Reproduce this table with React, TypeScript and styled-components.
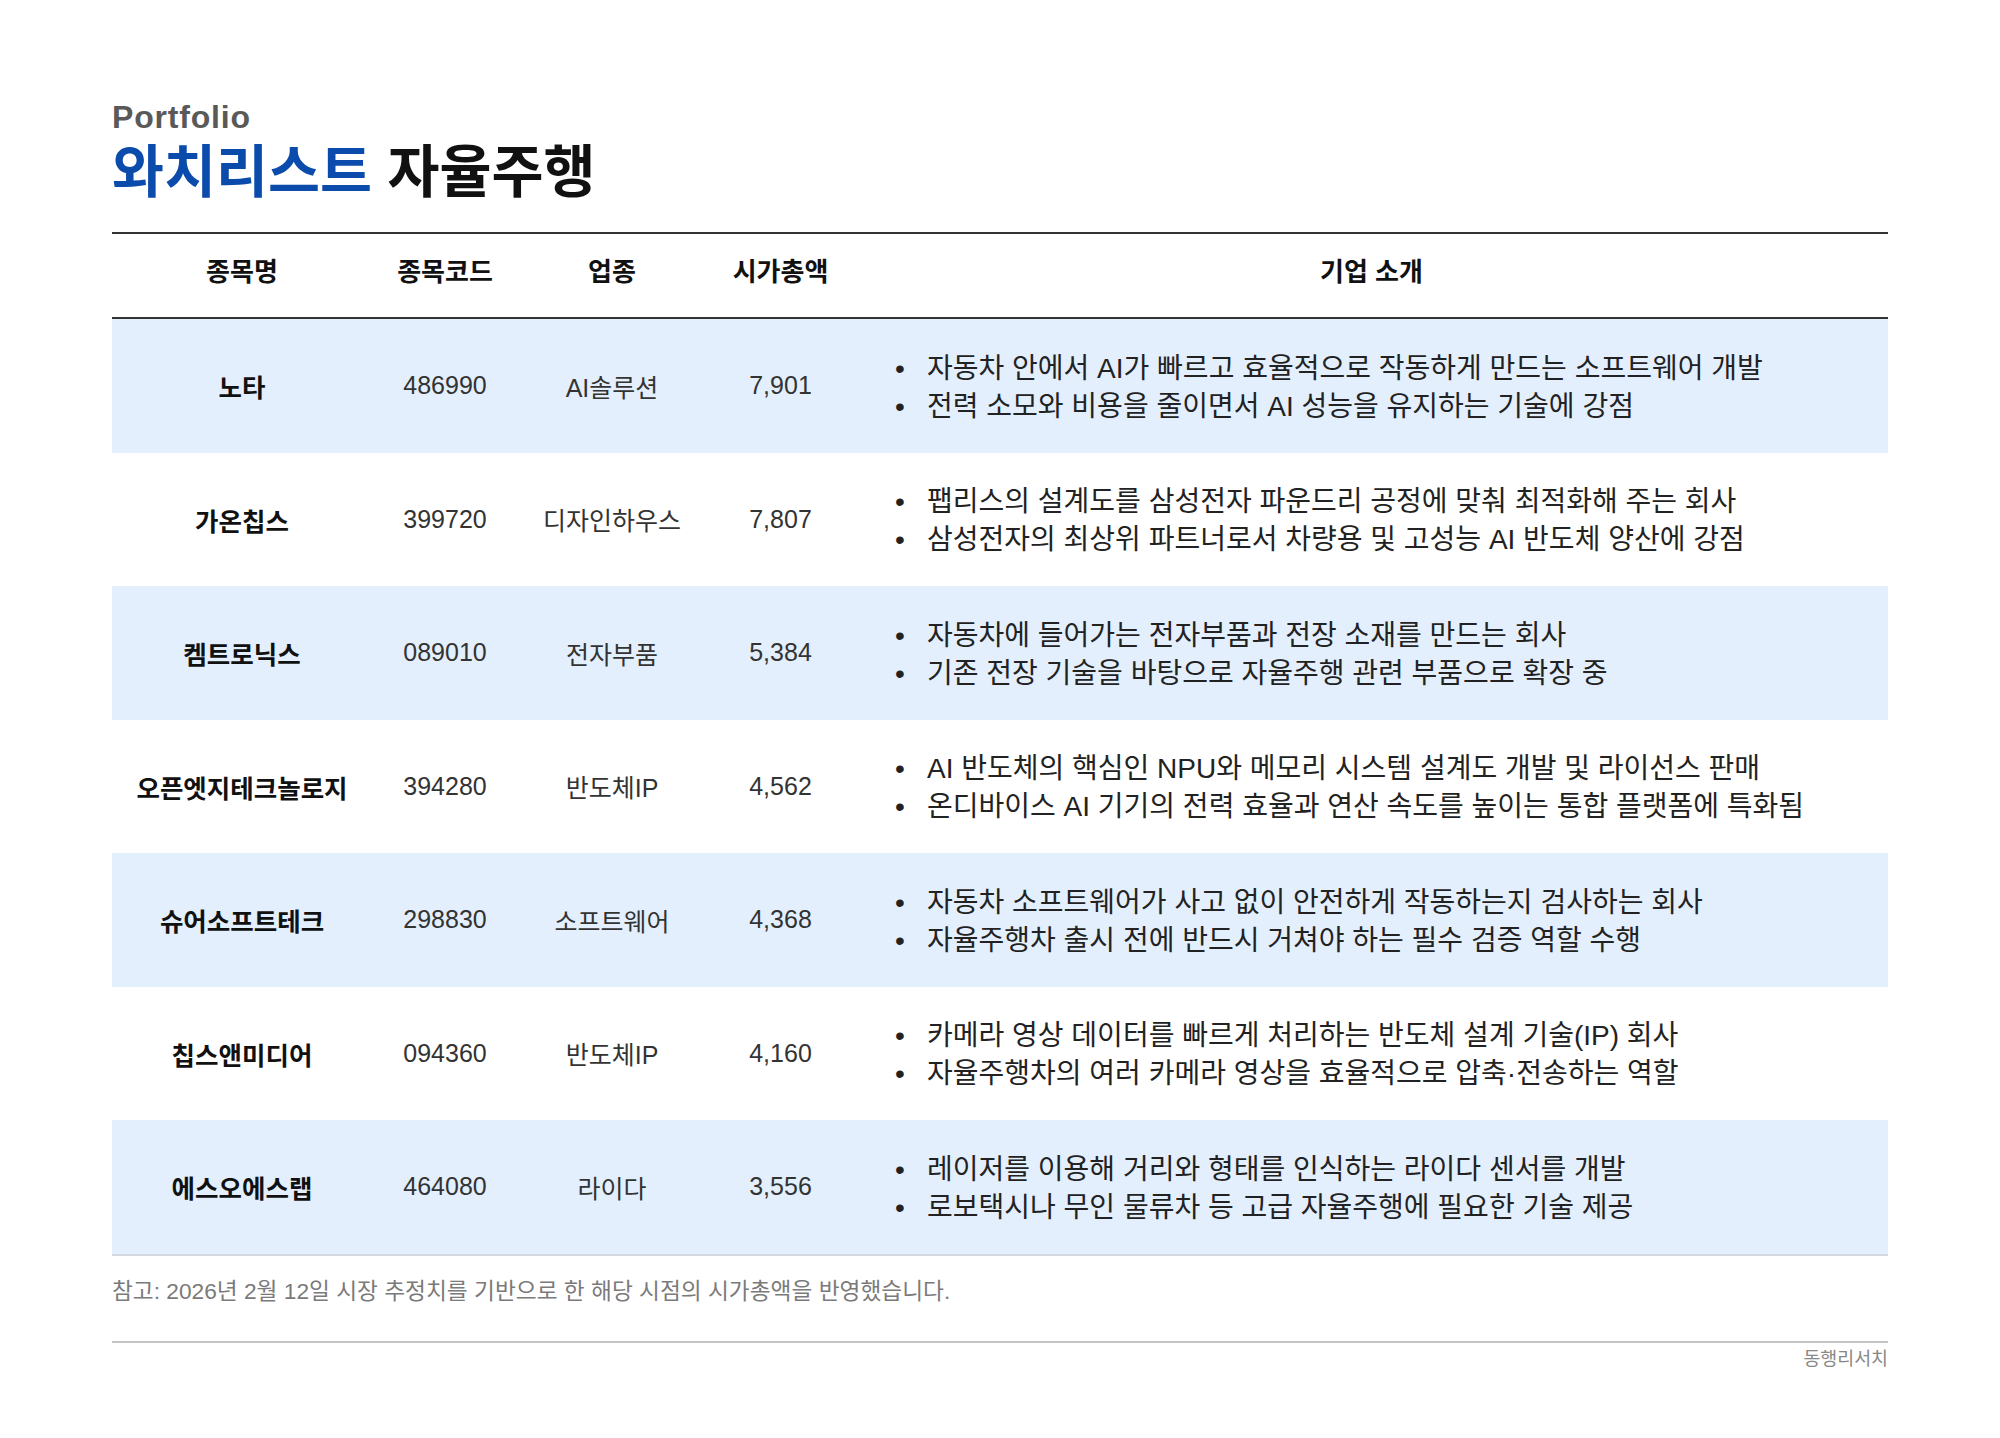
import React from 'react';
import styled, { createGlobalStyle } from 'styled-components';

type Company = {
  name: string;
  code: string;
  sector: string;
  cap: string;
  notes: string[];
};

const companies: Company[] = [
  {
    name: '노타',
    code: '486990',
    sector: 'AI솔루션',
    cap: '7,901',
    notes: [
      '자동차 안에서 AI가 빠르고 효율적으로 작동하게 만드는 소프트웨어 개발',
      '전력 소모와 비용을 줄이면서 AI 성능을 유지하는 기술에 강점',
    ],
  },
  {
    name: '가온칩스',
    code: '399720',
    sector: '디자인하우스',
    cap: '7,807',
    notes: [
      '팹리스의 설계도를 삼성전자 파운드리 공정에 맞춰 최적화해 주는 회사',
      '삼성전자의 최상위 파트너로서 차량용 및 고성능 AI 반도체 양산에 강점',
    ],
  },
  {
    name: '켐트로닉스',
    code: '089010',
    sector: '전자부품',
    cap: '5,384',
    notes: [
      '자동차에 들어가는 전자부품과 전장 소재를 만드는 회사',
      '기존 전장 기술을 바탕으로 자율주행 관련 부품으로 확장 중',
    ],
  },
  {
    name: '오픈엣지테크놀로지',
    code: '394280',
    sector: '반도체IP',
    cap: '4,562',
    notes: [
      'AI 반도체의 핵심인 NPU와 메모리 시스템 설계도 개발 및 라이선스 판매',
      '온디바이스 AI 기기의 전력 효율과 연산 속도를 높이는 통합 플랫폼에 특화됨',
    ],
  },
  {
    name: '슈어소프트테크',
    code: '298830',
    sector: '소프트웨어',
    cap: '4,368',
    notes: [
      '자동차 소프트웨어가 사고 없이 안전하게 작동하는지 검사하는 회사',
      '자율주행차 출시 전에 반드시 거쳐야 하는 필수 검증 역할 수행',
    ],
  },
  {
    name: '칩스앤미디어',
    code: '094360',
    sector: '반도체IP',
    cap: '4,160',
    notes: [
      '카메라 영상 데이터를 빠르게 처리하는 반도체 설계 기술(IP) 회사',
      '자율주행차의 여러 카메라 영상을 효율적으로 압축·전송하는 역할',
    ],
  },
  {
    name: '에스오에스랩',
    code: '464080',
    sector: '라이다',
    cap: '3,556',
    notes: [
      '레이저를 이용해 거리와 형태를 인식하는 라이다 센서를 개발',
      '로보택시나 무인 물류차 등 고급 자율주행에 필요한 기술 제공',
    ],
  },
];

const GlobalStyle = createGlobalStyle`
  body {
    margin: 0;
    background: #ffffff;
    font-family: "Liberation Sans", "Noto Sans CJK KR", sans-serif;
    color: #222;
  }
`;

export default function App() {
  return (
    <>
      <GlobalStyle />
      <Page>
        <Eyebrow>Portfolio</Eyebrow>
        <Title>
          <Accent>와치리스트</Accent> 자율주행
        </Title>

        <Table>
          <HeadRow>
            <HeadCell>종목명</HeadCell>
            <HeadCell>종목코드</HeadCell>
            <HeadCell>업종</HeadCell>
            <HeadCell>시가총액</HeadCell>
            <HeadCell>기업 소개</HeadCell>
          </HeadRow>
          {companies.map((c, i) => (
            <Row key={c.code} $shaded={i % 2 === 0}>
              <NameCell>{c.name}</NameCell>
              <Cell>{c.code}</Cell>
              <Cell>{c.sector}</Cell>
              <Cell>{c.cap}</Cell>
              <DescCell>
                {c.notes.map(n => (
                  <Note key={n}>{n}</Note>
                ))}
              </DescCell>
            </Row>
          ))}
        </Table>

        <Footnote>참고: 2026년 2월 12일 시장 추정치를 기반으로 한 해당 시점의 시가총액을 반영했습니다.</Footnote>
        <Footer>동행리서치</Footer>
      </Page>
    </>
  );
}

const Page = styled.div`
  width: 1776px;
  padding: 100px 0 60px 112px;
`;

const Eyebrow = styled.div`
  font-size: 32px;
  line-height: 34px;
  font-weight: 700;
  color: #595959;
  letter-spacing: 0.8px;
`;

const Title = styled.h1`
  margin: 6px 0 0;
  font-size: 56.5px;
  line-height: 66px;
  font-weight: 700;
  color: #111;
`;

const Accent = styled.span`
  color: #0b4bab;
`;

const Table = styled.div`
  margin-top: 26px;
  border-top: 2px solid #333;
  border-bottom: 2px solid #d4d8de;
`;

const columns = '260px 146px 188px 149px 1fr';

const HeadRow = styled.div`
  display: grid;
  grid-template-columns: ${columns};
  height: 83px;
  border-bottom: 2px solid #333;
`;

const HeadCell = styled.div`
  display: flex;
  align-items: center;
  justify-content: center;
  padding-bottom: 5px;
  font-size: 26px;
  line-height: 1.2;
  font-weight: 700;
  color: #111;
`;

const Row = styled.div<{ $shaded: boolean }>`
  display: grid;
  grid-template-columns: ${columns};
  background: ${p => (p.$shaded ? '#e3effd' : '#ffffff')};
`;

const Cell = styled.div`
  display: flex;
  align-items: center;
  justify-content: center;
  font-size: 25px;
  color: #333;
`;

const NameCell = styled(Cell)`
  font-size: 25.5px;
  font-weight: 700;
  color: #111;
`;

const DescCell = styled.div`
  display: flex;
  flex-direction: column;
  justify-content: center;
  padding: 30.5px 0 27px 40px;
`;

const Note = styled.div`
  display: flex;
  font-size: 28px;
  line-height: 38px;
  color: #222;

  &::before {
    content: '•';
    flex: 0 0 32px;
  }
`;

const Footnote = styled.div`
  margin-top: 20px;
  font-size: 22.7px;
  line-height: 30px;
  color: #7a7a7a;
  padding-bottom: 35px;
  border-bottom: 2px solid #c4c4c4;
`;

const Footer = styled.div`
  margin-top: 5px;
  text-align: right;
  font-size: 18.4px;
  line-height: 22px;
  color: #888;
`;
